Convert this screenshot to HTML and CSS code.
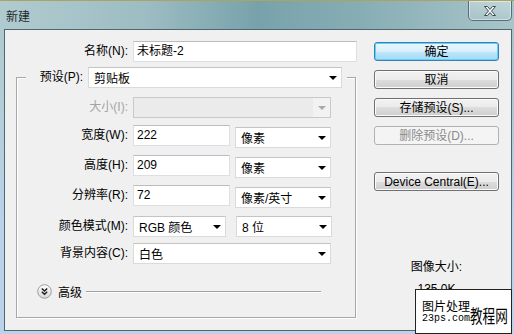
FILE: index.html
```html
<!DOCTYPE html>
<html lang="zh-CN">
<head>
    <meta charset="UTF-8">
    <title>新建</title>
    <link rel="stylesheet" href="styles.css">
</head>
<body>
    <div class="window">
        <!-- Title bar -->
        <div class="titlebar">
            <span class="title">新建</span>
            <button class="close-btn">
                <svg width="14" height="12" viewBox="0 0 14 12">
                    <path d="M1.5 1.5h3l2.5 3 2.5-3h3l-4 4.5 4 4.5h-3l-2.5-3-2.5 3h-3l4-4.5z" fill="#fff" stroke="#3b4b53" stroke-width="1" stroke-linejoin="round"/>
                </svg>
            </button>
        </div>

        <div class="client">
            <!-- Left side: document settings -->
            <div class="form-col">
                <div class="name-row">
                    <span class="lbl name-lbl">名称(N):</span>
                    <div class="field name-field">未标题-2</div>
                </div>

                <fieldset class="preset-group">
                    <legend>
                        <div class="legend-row">
                            <span class="lbl legend-lbl">预设(P):</span>
                            <div class="select preset-select">剪贴板<i class="arrow"></i></div>
                        </div>
                    </legend>

                    <div class="row row-size">
                        <span class="lbl disabled">大小(I):</span>
                        <div class="select select-disabled size-select"><span class="drop"><i class="arrow"></i></span></div>
                    </div>

                    <div class="row">
                        <span class="lbl">宽度(W):</span>
                        <div class="field num-field">222</div>
                        <div class="select unit-select">像素<i class="arrow"></i></div>
                    </div>

                    <div class="row">
                        <span class="lbl">高度(H):</span>
                        <div class="field num-field">209</div>
                        <div class="select unit-select">像素<i class="arrow"></i></div>
                    </div>

                    <div class="row">
                        <span class="lbl">分辨率(R):</span>
                        <div class="field num-field">72</div>
                        <div class="select unit-select">像素/英寸<i class="arrow"></i></div>
                    </div>

                    <div class="row row-mode">
                        <span class="lbl">颜色模式(M):</span>
                        <div class="select mode-select">RGB 颜色<i class="arrow"></i></div>
                        <div class="select bits-select">8 位<i class="arrow"></i></div>
                    </div>

                    <div class="row row-bg">
                        <span class="lbl">背景内容(C):</span>
                        <div class="select bg-select">白色<i class="arrow"></i></div>
                    </div>

                    <div class="advanced">
                        <svg class="adv-icon" width="15" height="15" viewBox="0 0 15 15">
                            <defs>
                                <linearGradient id="advGrad" x1="0" y1="0" x2="0" y2="1">
                                    <stop offset="0" stop-color="#ffffff"/>
                                    <stop offset="1" stop-color="#d6d6d6"/>
                                </linearGradient>
                            </defs>
                            <circle cx="7.5" cy="7.5" r="6.8" fill="url(#advGrad)" stroke="#9c9c9c"/>
                            <path d="M4.8 4.6 L7.5 7 L10.2 4.6 M4.8 7.8 L7.5 10.2 L10.2 7.8" fill="none" stroke="#1e1e1e" stroke-width="1.4"/>
                        </svg>
                        <span class="adv-text">高级</span>
                        <span class="adv-line"></span>
                    </div>
                </fieldset>
            </div>

            <!-- Right side: buttons and image size -->
            <div class="button-col">
                <button class="btn btn-default">确定</button>
                <button class="btn">取消</button>
                <button class="btn">存储预设(S)...</button>
                <button class="btn" disabled>删除预设(D)...</button>
                <button class="btn btn-device">Device Central(E)...</button>

                <div class="info-label">图像大小:</div>
                <div class="info-value">135.0K</div>
            </div>
        </div>

        <!-- Watermark stamp over the corner -->
        <div class="stamp">
            <div class="stamp-left">
                <div class="stamp-cn">图片处理</div>
                <div class="stamp-url">23ps.com</div>
            </div>
            <span class="stamp-big">教程网</span>
        </div>
    </div>
</body>
</html>
```

FILE: styles.css
```css
/* Photoshop "New" dialog, Windows 7 look */
* {
    box-sizing: border-box;
}

body {
    margin: 0;
    width: 514px;
    height: 334px;
    overflow: hidden;
    font-family: "Liberation Sans", "Noto Sans CJK SC", sans-serif;
    font-size: 12px;
    color: #000;
}

.window {
    position: relative;
    width: 514px;
    height: 334px;
    border-top: 1px solid #a9a55e;
    padding: 0 2px 0 4px;
    background:
        linear-gradient(to bottom, rgba(186, 210, 234, 0) 40px, rgba(186, 210, 234, 1) 220px),
        linear-gradient(to right, #b0cbd0 0%, #9dbdc3 28%, #78a2ab 50%, #87adb4 70%, #a8c5ca 100%);
}

/* Title bar */
.titlebar {
    height: 28px;
    display: flex;
    justify-content: space-between;
    align-items: flex-start;
    margin-left: -4px;
}

.title {
    padding: 7px 0 0 6px;
    color: #1f2a2e;
    font-family: "Noto Sans CJK SC", sans-serif;
    font-size: 12px;
    line-height: 16px;
}

.close-btn {
    width: 44px;
    height: 20px;
    padding: 0;
    border: 1px solid #566e78;
    border-top: none;
    border-radius: 0 0 5px 5px;
    background: linear-gradient(to bottom, rgba(255, 255, 255, 0.28), rgba(255, 255, 255, 0.08));
    box-shadow: inset 0 0 0 1px rgba(255, 255, 255, 0.45);
    display: flex;
    align-items: center;
    justify-content: center;
}

/* Client area */
.client {
    height: 302px;
    border: 1px solid #51676f;
    background: #f0f0f0;
    display: flex;
}

.form-col {
    flex: none;
    padding: 11px 0 0 11px;
}

.lbl {
    flex: none;
    text-align: right;
    line-height: 21px;
    white-space: nowrap;
}

.lbl.disabled {
    color: #a3a3a3;
}

.name-row {
    display: flex;
    gap: 5px;
}

.name-lbl {
    width: 112px;
}

.field {
    height: 21px;
    background: #fff;
    border: 1px solid #dcdfe4;
    border-top-color: #b9bcc2;
    padding-left: 3px;
    line-height: 19px;
    white-space: nowrap;
}

.name-field {
    width: 224px;
}

.num-field {
    width: 97px;
}

/* Group frame */
.preset-group {
    margin: 5px 0 0 0;
    width: 340px;
    min-width: 0;
    border: 1px solid #a7a7a7;
    box-shadow: inset 1px 1px 0 #fff, 1px 1px 0 #fff;
    padding: 0 0 18px 9px;
}

.preset-group legend {
    padding: 0 5px 0 0;
    background: #f0f0f0;
}

.legend-row {
    display: flex;
    gap: 5px;
}

.legend-lbl {
    width: 57px;
}

.select {
    height: 21px;
    background: #fff;
    border: 1px solid #dadada;
    border-top-color: #c4c4c4;
    padding-left: 5px;
    display: flex;
    align-items: center;
    white-space: nowrap;
}

.arrow {
    margin-left: auto;
    margin-right: 4px;
    width: 0;
    height: 0;
    border-left: 4px solid transparent;
    border-right: 4px solid transparent;
    border-top: 4px solid #000;
}

.preset-select {
    width: 254px;
}

.select-disabled {
    background: #ebebeb;
    border-color: #c9c9c9;
    padding-left: 0;
    justify-content: flex-end;
}

.select-disabled .drop {
    width: 17px;
    height: 19px;
    background: #f2f2f2;
    display: flex;
    align-items: center;
}

.select-disabled .arrow {
    border-top-color: #a9a9a9;
    margin-right: 4px;
}

.size-select,
.bg-select {
    width: 198px;
}

.unit-select,
.bits-select {
    width: 96px;
}

.unit-select {
    margin-top: 2px;
}

.mode-select {
    width: 93px;
}

/* Rows inside the group */
.row {
    display: flex;
    align-items: flex-start;
    gap: 5px;
    margin-top: 7px;
}

.row .lbl {
    width: 102px;
}

.row-size {
    margin-top: 9px;
}

.row-mode {
    margin-top: 8px;
}

.row-mode .bits-select {
    margin-left: 5px;
}

.row-bg {
    margin-top: 6px;
}

.advanced {
    display: flex;
    align-items: center;
    height: 15px;
    margin-top: 20px;
    padding-left: 11px;
    padding-right: 34px;
}

.adv-icon {
    flex: none;
}

.adv-text {
    margin-left: 6px;
    font-size: 12px;
}

.adv-line {
    flex: 1;
    margin-left: 4px;
    border-top: 1px solid #a0a0a0;
    border-bottom: 1px solid #fff;
}

/* Right column */
.button-col {
    width: 125px;
    margin-left: auto;
    margin-right: 12px;
    padding-top: 12px;
    display: flex;
    flex-direction: column;
    align-items: center;
}

.btn {
    width: 125px;
    height: 19px;
    margin-bottom: 9px;
    padding: 0;
    border: 1px solid #707070;
    border-radius: 3px;
    background: linear-gradient(to bottom, #f2f2f2 0%, #ebebeb 50%, #dddddd 50%, #cfcfcf 100%);
    box-shadow: inset 0 0 0 1px #fbfbfb;
    font-family: "Liberation Sans", "Noto Sans CJK SC", sans-serif;
    font-size: 12px;
    line-height: 16px;
    color: #000;
}

.btn-default {
    border-color: #3c7fb1;
    background: linear-gradient(to bottom, #eaf6fd 0%, #d9f0fc 50%, #bee6fd 50%, #a7d9f5 100%);
    box-shadow: inset 0 0 0 1px #5fd2fa;
}

.btn:disabled {
    border-color: #adb2b5;
    background: #f4f4f4;
    box-shadow: none;
    color: #8a8a8a;
}

.btn-device {
    margin-top: 18px;
}

.info-label {
    margin-top: 59px;
    line-height: 16px;
}

.info-value {
    margin-top: 6px;
    line-height: 16px;
}

/* Watermark stamp */
.stamp {
    position: absolute;
    left: 415px;
    top: 288px;
    width: 97px;
    height: 45px;
    background: #fff;
    border: 1px solid #222;
    display: flex;
    align-items: center;
    padding-left: 6px;
}

.stamp-left {
    display: flex;
    flex-direction: column;
}

.stamp-cn {
    font-family: "Noto Sans CJK SC", sans-serif;
    font-size: 12px;
    line-height: 14px;
}

.stamp-url {
    font-family: "Liberation Mono", monospace;
    font-size: 10px;
    line-height: 12px;
}

.stamp-big {
    display: inline-block;
    margin-top: 6px;
    font-family: "Noto Sans CJK SC", sans-serif;
    font-size: 18px;
    line-height: 20px;
    transform: scaleX(0.7);
    transform-origin: left center;
    white-space: nowrap;
}
```
